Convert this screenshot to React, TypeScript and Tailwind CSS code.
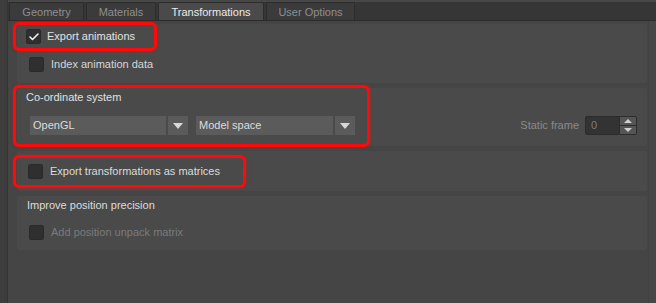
import { Check } from "lucide-react"

const tabs = [
  { label: "Geometry", w: "w-[75px]" },
  { label: "Materials", w: "w-[70px]" },
  { label: "Transformations", w: "w-[106px]", active: true },
  { label: "User Options", w: "w-[89px]" },
]

function Box({ checked = false }: { checked?: boolean }) {
  return (
    <span className="flex size-[15px] shrink-0 items-center justify-center rounded-[2px] border border-[#2a2a2a] bg-[#2f2f2f]">
      {checked && <Check className="size-[12px] text-[#f2f2f2]" strokeWidth={3.2} />}
    </span>
  )
}

function Arrow() {
  return (
    <svg width="10" height="6" viewBox="0 0 10 6" className="text-[#d8d8d8]">
      <path d="M0 0h10L5 6z" fill="currentColor" />
    </svg>
  )
}

function Select({ value, w }: { value: string; w: string }) {
  return (
    <div className={`flex h-[19px] gap-[2px] ${w}`}>
      <div className="flex flex-1 items-center bg-[#5b5b5b] pl-[3px] text-[#dcdcdc]">{value}</div>
      <div className="flex w-[20px] items-center justify-center bg-[#5b5b5b]">
        <Arrow />
      </div>
    </div>
  )
}

const redBox = "outline-[3px] outline-solid outline-[#ff0a0a] rounded-[3px] shadow-[0_0_4px_2px_rgba(255,0,0,0.6)]"

export default function App() {
  return (
    <div className="flex h-[303px] w-[656px] overflow-hidden bg-[#454545] text-[11px] text-[#d6d6d6] [font-family:'Liberation_Sans',Arial,sans-serif]">
      <div className="w-[8px] shrink-0 border-r border-[#333] bg-[#3d3d3d]" />

      <div className="flex flex-1 flex-col">
        <div className="flex h-[21px] shrink-0 gap-[2px] border-t-[2px] border-b border-t-[#474747] border-b-[#2b2b2b] bg-[#363636] pl-[1px]">
          {tabs.map((t) => (
            <div
              key={t.label}
              className={`flex items-center justify-center rounded-t-[2px] border border-b-0 border-[#2c2c2c] pt-[2px] ${t.w} ${
                t.active ? "bg-[#4a4a4a] text-[#ececec]" : "bg-[#3b3b3b] text-[#8f8f8f]"
              }`}
            >
              {t.label}
            </div>
          ))}
        </div>

        <div className="flex flex-1">
          <div className="flex flex-1 flex-col gap-[5px] pl-[9px] pt-[3px]">
            <section className="flex h-[59px] flex-col rounded-[2px] bg-[#4a4a4a]">
              <div className={`ml-[-1px] mt-[1px] flex h-[23px] w-[138px] items-center gap-[6px] pl-[10px] ${redBox}`}>
                <Box checked />
                <span className="text-[#e2e2e2]">Export animations</span>
              </div>
              <div className="mt-[8px] flex items-center gap-[7px] pl-[12px]">
                <Box />
                <span>Index animation data</span>
              </div>
            </section>

            <section className="flex h-[58px] items-end justify-between rounded-[2px] bg-[#4a4a4a] pr-[10px]">
              <div className={`ml-[-1px] flex h-[56px] w-[351px] flex-col self-start pl-[10px] pt-[3px] ${redBox}`}>
                <span className="leading-[13px] text-[#e0e0e0]">Co-ordinate system</span>
                <div className="mt-[12px] flex gap-[8px] pl-[4px]">
                  <Select value="OpenGL" w="w-[158px]" />
                  <Select value="Model space" w="w-[159px]" />
                </div>
              </div>
              <div className="mb-[11px] flex items-center gap-[6px]">
                <span className="text-[#8a8a8a]">Static frame</span>
                <div className="flex h-[19px]">
                  <div className="flex w-[35px] items-center rounded-l-[2px] border border-[#2c2c2c] bg-[#333] pl-[5px] text-[#7c7c7c]">
                    0
                  </div>
                  <div className="flex w-[17px] flex-col rounded-r-[2px] border border-l-0 border-[#2c2c2c] bg-[#555]">
                    <div className="flex flex-1 items-center justify-center border-b border-[#2c2c2c]">
                      <svg width="8" height="4" viewBox="0 0 8 4"><path d="M4 0l4 4H0z" fill="#cfcfcf" /></svg>
                    </div>
                    <div className="flex flex-1 items-center justify-center">
                      <svg width="8" height="4" viewBox="0 0 8 4"><path d="M0 0h8L4 4z" fill="#cfcfcf" /></svg>
                    </div>
                  </div>
                </div>
              </div>
            </section>

            <section className="flex h-[40px] items-center rounded-[2px] bg-[#4a4a4a]">
              <div className={`ml-[-1px] flex h-[27px] w-[227px] items-center gap-[7px] pl-[12px] ${redBox}`}>
                <Box />
                <span className="text-[#dcdcdc]">Export transformations as matrices</span>
              </div>
            </section>

            <section className="flex h-[54px] flex-col rounded-[2px] bg-[#4a4a4a] pl-[10px] pt-[3px]">
              <span className="leading-[13px] text-[#dcdcdc]">Improve position precision</span>
              <div className="mt-[12px] flex items-center gap-[7px] pl-[2px]">
                <Box />
                <span className="text-[#7a7a7a]">Add position unpack matrix</span>
              </div>
            </section>
          </div>
          <div className="ml-[1px] w-[8px] shrink-0 border-l border-[#404040] bg-[#474747]" />
        </div>
      </div>
    </div>
  )
}
